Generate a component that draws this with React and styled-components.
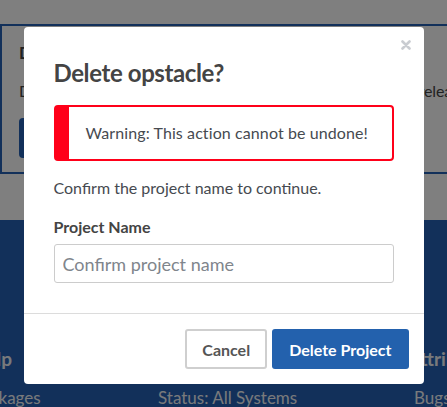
import React from "react";
import styled, { createGlobalStyle } from "styled-components";

const Global = createGlobalStyle`
  html, body { margin: 0; padding: 0; overflow: hidden; background: #fff; }
  body { font-family: Lato, "Noto Sans", sans-serif; color: #444; }
  * { box-sizing: border-box; }
`;

const Page = styled.div`
  width: 447px;
  height: 407px;
  padding-top: 24px;
  overflow: hidden;
  display: flex;
  flex-direction: column;
`;

const Card = styled.section`
  width: 640px;
  border: 2px solid #2460b4;
  border-right: none;
  padding: 15px 17px 14px;
  display: flex;
  flex-direction: column;
  align-items: flex-start;
`;

const CardTitle = styled.h3`
  margin: 0;
  font-size: 17px;
  line-height: 24px;
  font-weight: 700;
  color: #444;
`;

const CardText = styled.p`
  margin: 14px 0 15px;
  font-size: 16px;
  line-height: 24px;
  letter-spacing: -0.12px;
  color: #444;
  white-space: nowrap;
`;

const CardButton = styled.button`
  height: 40px;
  padding: 0 18px;
  border: none;
  border-radius: 4px;
  background: #2460b4;
  color: #fff;
  font: 700 16px Lato, sans-serif;
`;

const Footer = styled.footer`
  margin-top: 46px;
  flex: 1;
  background: #2460b4;
  padding-top: 126px;
`;

const FooterGrid = styled.div`
  margin-left: -28px;
  display: grid;
  grid-template-columns: 186px 250px 200px;
`;

const FooterCol = styled.div`
  display: flex;
  flex-direction: column;
  gap: 14px;
  white-space: nowrap;
`;

const FooterHead = styled.h4`
  margin: 0;
  font-size: 19px;
  line-height: 26px;
  font-weight: 700;
  color: #f2f4f8;
`;

const FooterLink = styled.span`
  font-size: 17px;
  line-height: 24px;
  color: #f2f4f8;
  padding-left: ${(p) => p.$indent || 0}px;
`;

const Overlay = styled.div`
  position: fixed;
  inset: 0;
  background: rgba(0, 0, 0, 0.5);
  display: flex;
  justify-content: center;
  align-items: flex-start;
  padding-top: 27px;
`;

const Modal = styled.div`
  position: relative;
  width: 400px;
  background: #fff;
  border-radius: 4px;
  display: flex;
  flex-direction: column;
`;

const Close = styled.button`
  position: absolute;
  top: 11px;
  right: 11px;
  width: 14px;
  height: 14px;
  padding: 0;
  border: none;
  background: transparent;
  display: flex;
  align-items: center;
  justify-content: center;
`;

const Body = styled.div`
  padding: 30px 30px 30px;
  display: flex;
  flex-direction: column;
  border-bottom: 1px solid #dcdcdc;
`;

const Title = styled.h2`
  margin: 0;
  font-size: 24px;
  line-height: 31px;
  font-weight: 700;
  letter-spacing: -0.4px;
  color: #444;
`;

const Alert = styled.div`
  margin-top: 17px;
  border: 2px solid #ff0019;
  border-left-width: 15px;
  border-radius: 4px;
  padding: 14px 15px 14px 17px;
  font-size: 16px;
  line-height: 24px;
  letter-spacing: 0.1px;
  color: #464a50;
`;

const Text = styled.p`
  margin: 15px 0 0;
  font-size: 16px;
  line-height: 24px;
  color: #464a50;
`;

const Label = styled.label`
  margin-top: 15px;
  font-size: 16px;
  line-height: 24px;
  font-weight: 700;
  color: #444;
`;

const Input = styled.input`
  margin-top: 5px;
  height: 39px;
  border: 1px solid #ccc;
  border-radius: 3px;
  padding: 0 8px;
  font: 18px Lato, sans-serif;
  color: #444;
  outline: none;
  &::placeholder { color: #80858c; }
`;

const Actions = styled.div`
  padding: 15px;
  display: flex;
  justify-content: flex-end;
  gap: 5px;
`;

const Button = styled.button`
  height: 40px;
  padding: 0 ${(p) => (p.$primary ? "17px" : "15px")};
  border-radius: 3px;
  border: ${(p) => (p.$primary ? "none" : "2px solid #cfcfcf")};
  background: ${(p) => (p.$primary ? "#2361ad" : "#fff")};
  color: ${(p) => (p.$primary ? "#fff" : "#555")};
  font: 700 16px Lato, sans-serif;
  cursor: pointer;
`;

export default function App() {
  return (
    <>
      <Global />
      <Page>
        <Card>
          <CardTitle>Danger Zone</CardTitle>
          <CardText>
            Deleting this project permanently removes all its data and releases.
          </CardText>
          <CardButton>Delete Project</CardButton>
        </Card>
        <Footer>
          <FooterGrid>
            <FooterCol>
              <FooterHead>Help</FooterHead>
              <FooterLink>Packages</FooterLink>
            </FooterCol>
            <FooterCol>
              <FooterHead>About</FooterHead>
              <FooterLink>Status: All Systems</FooterLink>
            </FooterCol>
            <FooterCol>
              <FooterHead>Attribution</FooterHead>
              <FooterLink $indent={6}>Bugs</FooterLink>
            </FooterCol>
          </FooterGrid>
        </Footer>
      </Page>
      <Overlay>
        <Modal role="dialog">
          <Close aria-label="Close">
            <svg width="10" height="10" viewBox="0 0 10 10">
              <path d="M1.5 1.5 L8.5 8.5 M8.5 1.5 L1.5 8.5" stroke="#c9ccd1" strokeWidth="2.6" strokeLinecap="round" />
            </svg>
          </Close>
          <Body>
            <Title>Delete opstacle?</Title>
            <Alert>Warning: This action cannot be undone!</Alert>
            <Text>Confirm the project name to continue.</Text>
            <Label htmlFor="pn">Project Name</Label>
            <Input id="pn" placeholder="Confirm project name" />
          </Body>
          <Actions>
            <Button>Cancel</Button>
            <Button $primary>Delete Project</Button>
          </Actions>
        </Modal>
      </Overlay>
    </>
  );
}
